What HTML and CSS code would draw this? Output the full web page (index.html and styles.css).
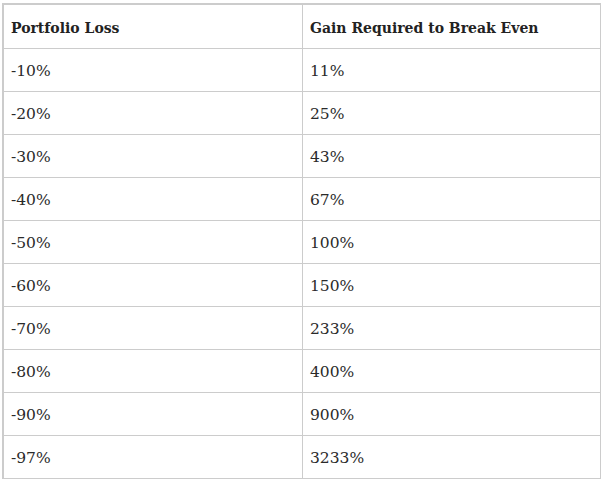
FILE: index.html
```html
<!DOCTYPE html>
<html>
<head>
<meta charset="utf-8">
<link rel="stylesheet" href="styles.css">
</head>
<body>
<div class="wrap">
<table class="loss">
<thead>
<tr><th>Portfolio Loss</th><th>Gain Required to Break Even</th></tr>
</thead>
<tbody>
<tr><td>-10%</td><td>11%</td></tr>
<tr><td>-20%</td><td>25%</td></tr>
<tr><td>-30%</td><td>43%</td></tr>
<tr><td>-40%</td><td>67%</td></tr>
<tr><td>-50%</td><td>100%</td></tr>
<tr><td>-60%</td><td>150%</td></tr>
<tr><td>-70%</td><td>233%</td></tr>
<tr><td>-80%</td><td>400%</td></tr>
<tr><td>-90%</td><td>900%</td></tr>
<tr><td>-97%</td><td>3233%</td></tr>
</tbody>
</table>
</div>
</body>
</html>
```
FILE: styles.css
```css
html, body {
  margin: 0;
  padding: 0;
  background: #ffffff;
}
.wrap {
  padding: 3px 0 0 2px;
}
.loss {
  border-collapse: collapse;
  width: 599px;
  font-family: "DejaVu Serif", serif;
  color: #222222;
  border-top: 2px solid #cccccc;
  border-left: 2px solid #cccccc;
  border-right: 1px solid #cccccc;
  border-bottom: 1px solid #cccccc;
}
.loss th, .loss td {
  border: 1px solid #cccccc;
  text-align: left;
  padding: 0 7px;
}
.loss th {
  height: 41px;
  padding-top: 2px;
  font-size: 14px;
  font-weight: bold;
}
.loss td {
  height: 40px;
  font-size: 15.5px;
  color: #2a2a2a;
  padding-top: 2px;
}
.loss th:first-child, .loss td:first-child {
  width: 284px;
}
```
